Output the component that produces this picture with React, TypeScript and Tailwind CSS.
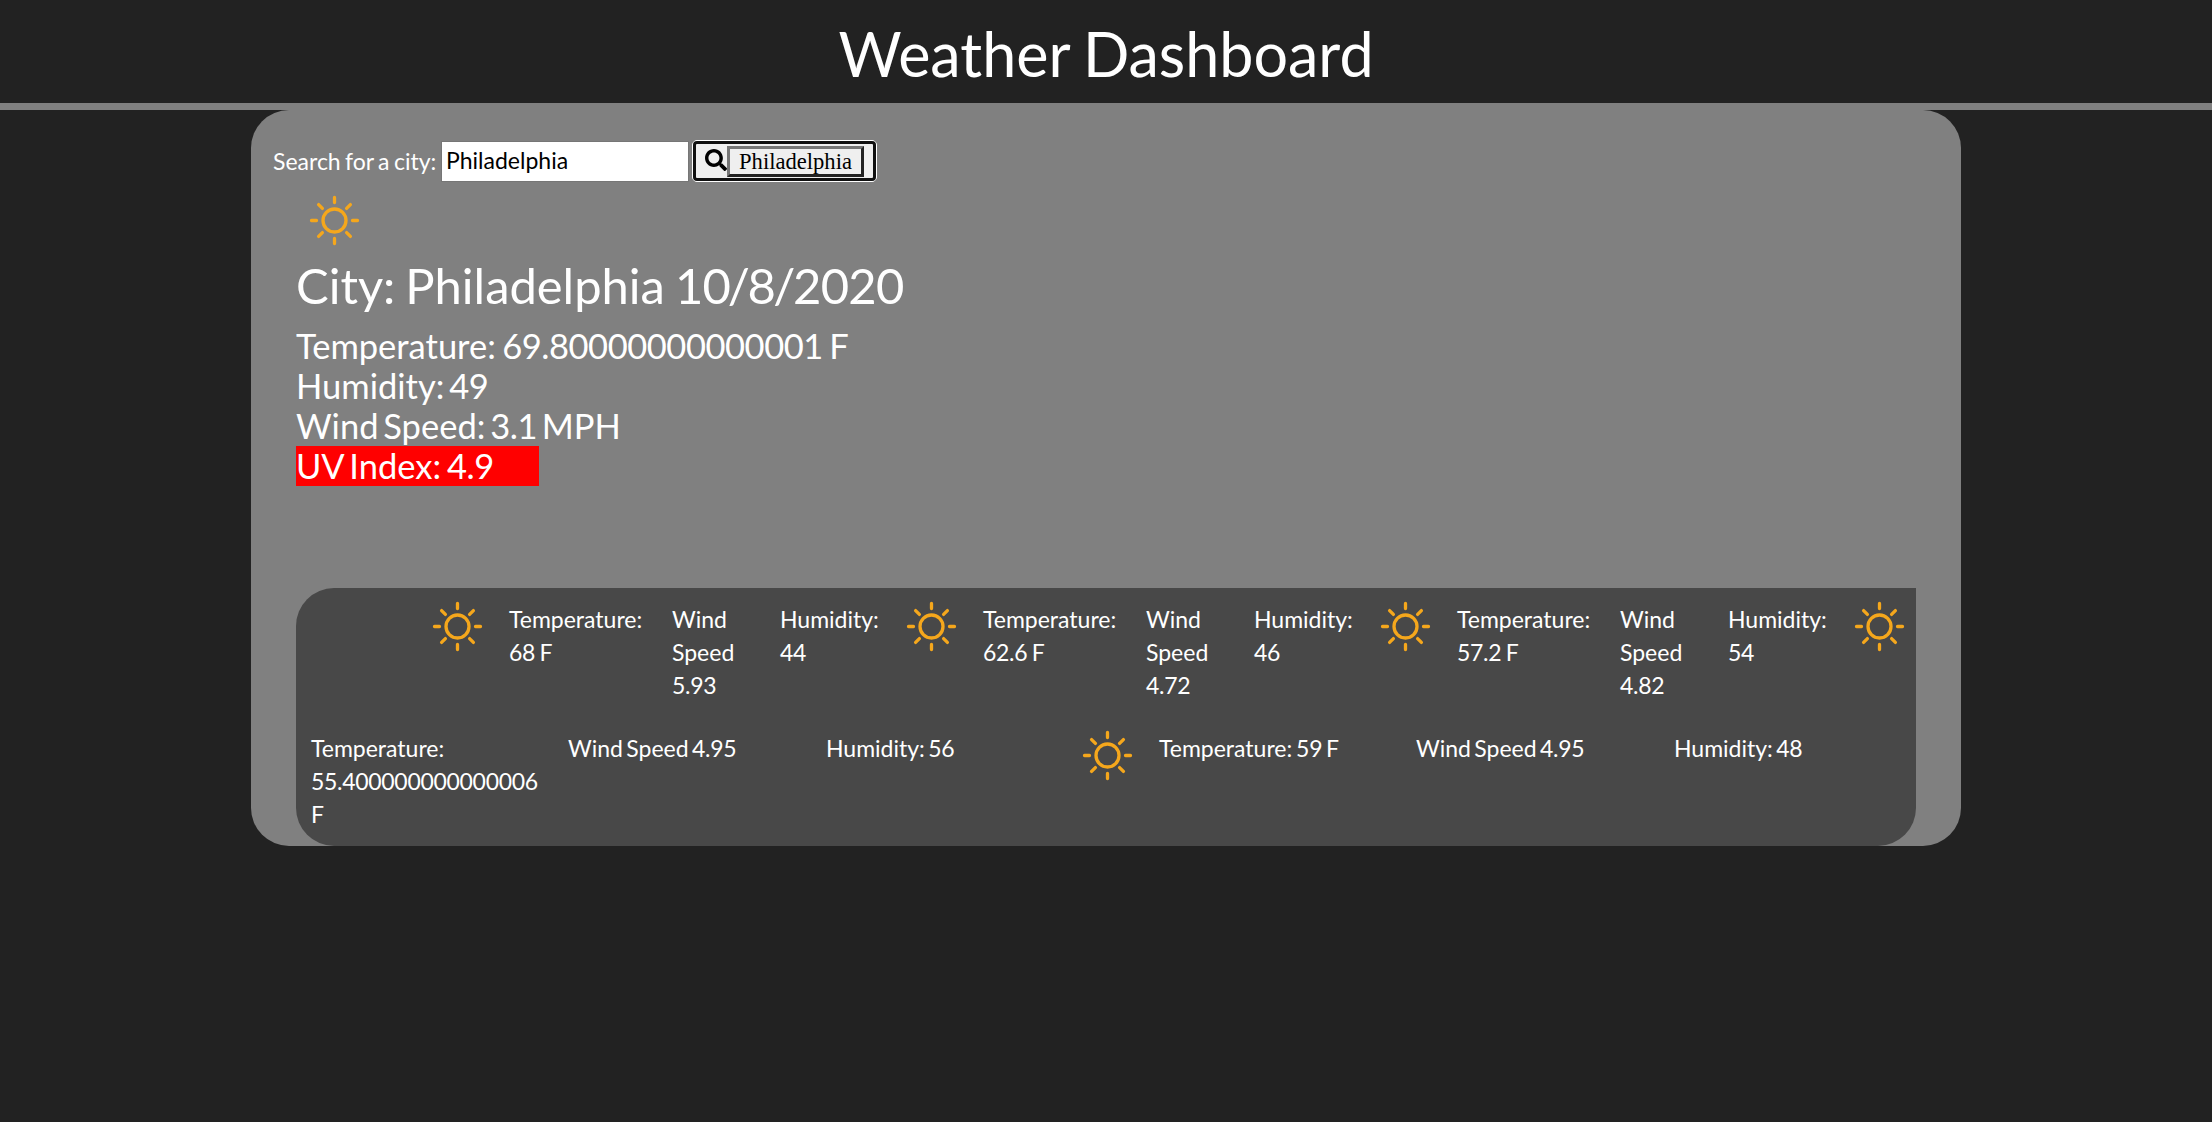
import { FaSearch } from "react-icons/fa";

const days = [
  { temp: "68", wind: "5.93", humidity: "44" },
  { temp: "62.6", wind: "4.72", humidity: "46" },
  { temp: "57.2", wind: "4.82", humidity: "54" },
];

function Sun() {
  return (
    <svg
      className="block size-[73px] shrink-0"
      viewBox="-36.5 -36.5 73 73"
      fill="none"
      stroke="#f5a71c"
      strokeWidth="3.3"
      strokeLinecap="round"
    >
      <circle r="11.5" />
      <path d="M0-23V-18M0 23V18M-23 0H-18M23 0H18M-15.9-15.9L-12.1-12.1M15.9-15.9L12.1-12.1M-15.9 15.9L-12.1 12.1M15.9 15.9L12.1 12.1" />
    </svg>
  );
}

function Num({ children }: { children: string }) {
  return <span className="tracking-[-0.013em]">{children}</span>;
}

export default function App() {
  return (
    <div className="min-h-[1122px] bg-[#222] font-['Lato',sans-serif] text-[23px] leading-[33px] text-white [word-spacing:-2.5px]">
      <header className="h-[110px] border-b-[7px] border-[#808080] pt-[19px] text-center">
        <h1 className="text-[61px] leading-[70px] [word-spacing:-2px]">Weather Dashboard</h1>
      </header>

      <main className="mx-auto flex h-[736px] w-[1710px] flex-col rounded-[38px] bg-[#808080]">
        <div className="flex items-center pt-[30px] pl-[22px]">
          <label htmlFor="city" className="w-[168px] whitespace-nowrap [word-spacing:-1.5px]">
            Search for a city:
          </label>
          <input
            id="city"
            defaultValue="Philadelphia"
            className="h-[41px] w-[248px] border border-[#767676] bg-white px-[4px] pb-[2px] text-black outline-none"
          />
          <div className="ml-[3px] flex h-[42px] w-[185px] items-center rounded-[5px] border border-white bg-[#efefef]">
            <div className="flex h-full w-full items-center rounded-[4px] border-[3px] border-[#101010] pl-[9px]">
              <FaSearch className="mb-[2px] size-[22px] shrink-0 text-black" />
              <button className="h-[31px] w-[137px] border-[3px] border-t-[#767676] border-r-[#222] border-b-[#222] border-l-[#767676] bg-[#efefef] text-center font-['Liberation_Serif',serif] text-[22.6px] leading-[25px] text-black">
                Philadelphia
              </button>
            </div>
          </div>
        </div>

        <section className="pl-[45px]">
          <div className="mt-[2px] ml-[2px]">
            <Sun />
          </div>
          <h2 className="-mt-px text-[48.9px] leading-[58px]">
            City: Philadelphia <Num>10</Num>
            <span className="-mx-[2.5px]">/</span>8<span className="-mx-[2.5px]">/</span>
            <Num>2020</Num>
          </h2>
          <div className="mt-[12px] text-[34.5px] leading-[40px] [word-spacing:-4px]">
            <p className="[word-spacing:-2.5px]">
              Temperature: <Num>69.80000000000001</Num> F
            </p>
            <p>
              Humidity: <Num>49</Num>
            </p>
            <p>
              Wind Speed: <Num>3.1</Num> MPH
            </p>
            <p className="w-[243px] bg-[#f00] [word-spacing:-3px]">
              UV Index: <Num>4.9</Num>
            </p>
          </div>
        </section>

        <section className="mt-auto ml-[45px] h-[258px] w-[1620px] rounded-[38px] rounded-tr-none bg-[#484848]">
          <div className="flex h-[129px] pt-[2px] pl-[125px]">
            {days.map((d) => (
              <div key={d.temp} className="flex w-[474px] shrink-0">
                <Sun />
                <p className="mt-[13px] w-[163px] pl-[15px] [word-spacing:-1.5px]">
                  Temperature:
                  <br />
                  <Num>{d.temp}</Num> F
                </p>
                <p className="mt-[13px] w-[108px] px-[15px]">
                  Wind
                  <br />
                  Speed
                  <br />
                  <Num>{d.wind}</Num>
                </p>
                <p className="mt-[13px] w-[130px] pl-[15px]">
                  Humidity:
                  <br />
                  <Num>{d.humidity}</Num>
                </p>
              </div>
            ))}
            <Sun />
          </div>
          <div className="flex h-[129px] pt-[2px]">
            <p className="mt-[13px] w-[258px] pl-[15px]">
              Temperature:
              <br />
              <Num>55.400000000000006</Num>
              <br />F
            </p>
            <p className="mt-[13px] w-[258px] pl-[14px]">
              Wind Speed <Num>4.95</Num>
            </p>
            <p className="mt-[13px] w-[259px] pl-[14px]">
              Humidity: <Num>56</Num>
            </p>
            <Sun />
            <p className="mt-[13px] w-[258px] pl-[15px] [word-spacing:-2px]">
              Temperature: <Num>59</Num> F
            </p>
            <p className="mt-[13px] w-[258px] pl-[14px]">
              Wind Speed <Num>4.95</Num>
            </p>
            <p className="mt-[13px] w-[240px] pl-[14px]">
              Humidity: <Num>48</Num>
            </p>
          </div>
        </section>
      </main>
    </div>
  );
}
